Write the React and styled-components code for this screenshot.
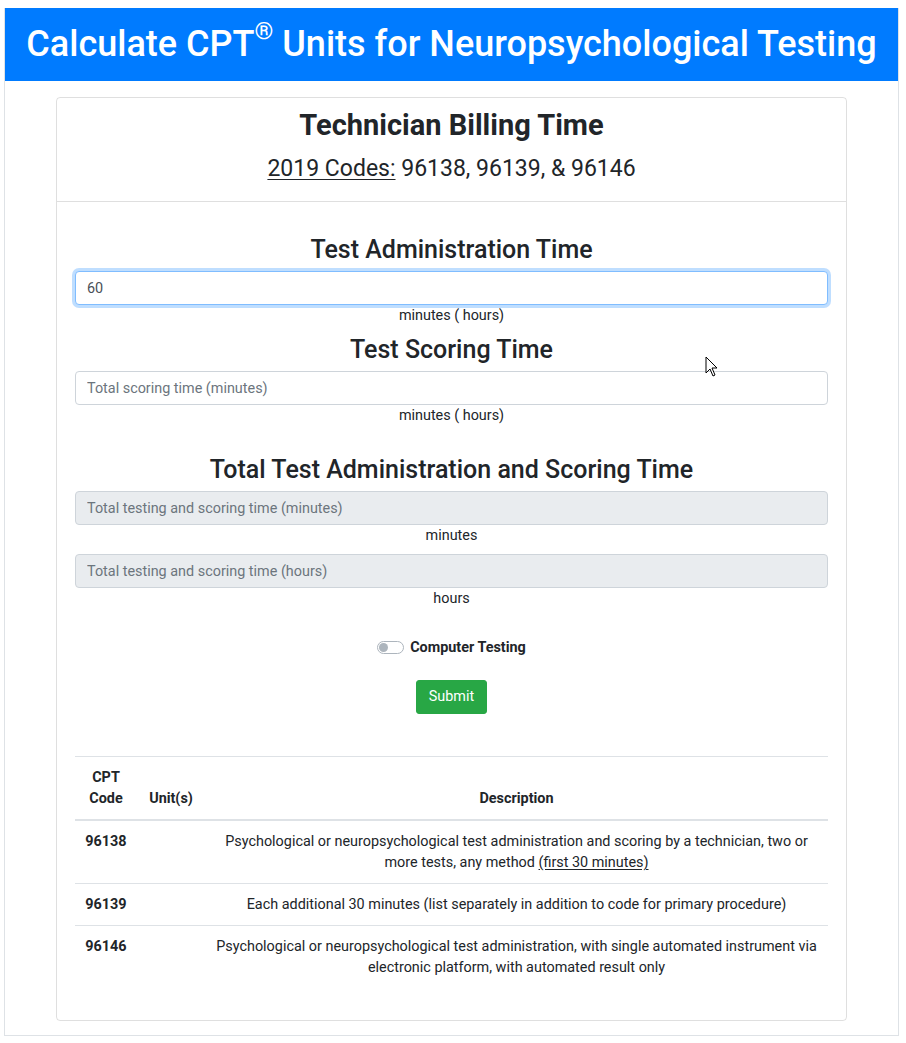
import React from 'react';
import styled, { createGlobalStyle } from 'styled-components';

const GlobalStyle = createGlobalStyle`
  body {
    margin: 0;
    background: #ffffff;
    font-family: Roboto, 'Liberation Sans', Arial, sans-serif;
    color: #212529;
  }
  * {
    box-sizing: border-box;
  }
`;

const Page = styled.div`
  position: relative;
  margin: 8px 7px 0 4px;
  border: 1px solid #dee2e6;
  border-top: none;
  padding-bottom: 14px;
`;

const Banner = styled.div`
  background: #007bff;
  height: 73px;
  display: flex;
  align-items: center;
  justify-content: center;
`;

const BannerTitle = styled.h1`
  margin: 0;
  color: #ffffff;
  font-size: 36px;
  font-weight: 500;
  line-height: 1.2;
  white-space: nowrap;

  sup {
    font-size: 24px;
    line-height: 0;
    position: relative;
    top: -4px;
    vertical-align: super;
  }
`;

const Card = styled.div`
  width: 791px;
  margin: 16px auto 0;
  border: 1px solid rgba(0, 0, 0, 0.125);
  border-radius: 4px;
`;

const CardHeader = styled.div`
  padding: 10px 20px 18px;
  border-bottom: 1px solid rgba(0, 0, 0, 0.125);
  text-align: center;
`;

const CardTitle = styled.h3`
  margin: 0 0 12px;
  font-size: 29px;
  font-weight: 700;
  line-height: 34px;
`;

const Codes = styled.div`
  font-size: 23px;
  font-weight: 400;
  line-height: 29px;

  u {
    text-decoration-thickness: 1px;
    text-underline-offset: 3px;
  }
`;

const CardBody = styled.div`
  padding: 33px 18px 20px 18px;
  text-align: center;
  font-size: 14.4px;
`;

const SectionTitle = styled.h3`
  margin: ${props => props.top || '0'} 0 7px;
  font-size: 25px;
  font-weight: 500;
  line-height: 29px;
`;

const Input = styled.input`
  display: block;
  width: 100%;
  height: 34px;
  padding: 6px 11px;
  font-family: Roboto, 'Liberation Sans', Arial, sans-serif;
  font-size: 14.4px;
  line-height: 20px;
  color: #495057;
  background: ${props => (props.disabled ? '#e9ecef' : '#ffffff')};
  border: 1px solid ${props => (props.focused ? '#80bdff' : '#ced4da')};
  border-radius: 4px;
  box-shadow: ${props => (props.focused ? '0 0 0 3px rgba(0, 123, 255, 0.25)' : 'none')};
  outline: none;
  margin-top: ${props => (props.gap ? '8px' : '0')};

  &::placeholder {
    color: #6c757d;
    opacity: 1;
  }
`;

const Unit = styled.div`
  line-height: 21px;
`;

const SwitchRow = styled.label`
  display: flex;
  align-items: center;
  justify-content: center;
  gap: 6px;
  margin-top: 28px;
  font-weight: 700;
  line-height: 21px;
`;

const Track = styled.span`
  position: relative;
  width: 27px;
  height: 13px;
  border: 1px solid #adb5bd;
  border-radius: 7px;
  background: #ffffff;

  &::after {
    content: '';
    position: absolute;
    top: 1px;
    left: 1px;
    width: 9px;
    height: 9px;
    border-radius: 50%;
    background: #adb5bd;
  }
`;

const SubmitButton = styled.button`
  margin-top: 22px;
  padding: 6px 12px;
  font-family: Roboto, 'Liberation Sans', Arial, sans-serif;
  font-size: 14.4px;
  line-height: 20px;
  color: #ffffff;
  background: #28a745;
  border: 1px solid #28a745;
  border-radius: 3px;
`;

const Table = styled.table`
  width: 100%;
  margin: 42px 0 12px;
  border-collapse: collapse;
  font-size: 14.4px;
  line-height: 21px;
`;

const Th = styled.th`
  width: ${props => props.w || 'auto'};
  padding: 10px;
  border-top: 1px solid #dee2e6;
  border-bottom: 2px solid #dee2e6;
  vertical-align: bottom;
  font-weight: 700;
  text-align: center;
`;

const Td = styled.td`
  padding: 10px;
  border-top: 1px solid #dee2e6;
  vertical-align: top;
  text-align: center;
  font-weight: ${props => (props.bold ? 700 : 400)};

  u {
    text-underline-offset: 2px;
  }
`;

const Cursor = styled.svg`
  position: absolute;
  left: 700px;
  top: 348px;
`;

const rows = [
  {
    code: '96138',
    desc: (
      <>
        Psychological or neuropsychological test administration and scoring by a technician, two or more
        tests, any method <u>(first 30 minutes)</u>
      </>
    ),
  },
  {
    code: '96139',
    desc: 'Each additional 30 minutes (list separately in addition to code for primary procedure)',
  },
  {
    code: '96146',
    desc: 'Psychological or neuropsychological test administration, with single automated instrument via electronic platform, with automated result only',
  },
];

const App = () => (
  <>
    <GlobalStyle />
    <Page>
      <Banner>
        <BannerTitle>
          Calculate CPT<sup>®</sup> Units for Neuropsychological Testing
        </BannerTitle>
      </Banner>

      <Card>
        <CardHeader>
          <CardTitle>Technician Billing Time</CardTitle>
          <Codes>
            <u>2019 Codes:</u> 96138, 96139, &amp; 96146
          </Codes>
        </CardHeader>

        <CardBody>
          <SectionTitle>Test Administration Time</SectionTitle>
          <Input focused defaultValue="60" />
          <Unit>minutes ( hours)</Unit>

          <SectionTitle top="9px">Test Scoring Time</SectionTitle>
          <Input placeholder="Total scoring time (minutes)" />
          <Unit>minutes ( hours)</Unit>

          <SectionTitle top="29px">Total Test Administration and Scoring Time</SectionTitle>
          <Input disabled placeholder="Total testing and scoring time (minutes)" />
          <Unit>minutes</Unit>
          <Input disabled gap placeholder="Total testing and scoring time (hours)" />
          <Unit>hours</Unit>

          <SwitchRow>
            <Track />
            Computer Testing
          </SwitchRow>

          <SubmitButton>Submit</SubmitButton>

          <Table>
            <thead>
              <tr>
                <Th w="62px">CPT Code</Th>
                <Th w="68px">Unit(s)</Th>
                <Th>Description</Th>
              </tr>
            </thead>
            <tbody>
              {rows.map(row => (
                <tr key={row.code}>
                  <Td bold>{row.code}</Td>
                  <Td />
                  <Td>{row.desc}</Td>
                </tr>
              ))}
            </tbody>
          </Table>
        </CardBody>
      </Card>

      <Cursor width="14" height="22" viewBox="0 0 14 22">
        <path d="M1 1 L1 17 L5 13 L8 20 L10 19 L7 12 L12 12 Z" fill="#ffffff" stroke="#000000" strokeWidth="1" />
      </Cursor>
    </Page>
  </>
);

export default App;
